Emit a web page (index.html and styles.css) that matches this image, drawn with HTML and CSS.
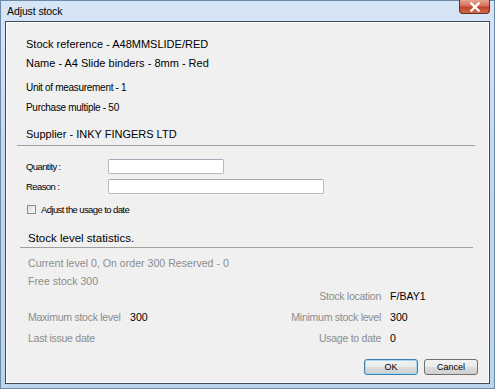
FILE: index.html
```html
<!DOCTYPE html>
<html lang="en">
<head>
    <meta charset="UTF-8">
    <title>Adjust stock</title>
    <link rel="stylesheet" href="styles.css">
</head>
<body>
    <div class="window">
        <div class="titlebar">
            <span class="title">Adjust stock</span>
            <div class="close">
                <svg width="14" height="10" viewBox="0 0 14 10">
                    <path d="M3.5 1.5 L10.5 8.5 M10.5 1.5 L3.5 8.5" stroke="#fff" stroke-width="2.4" stroke-linecap="square"/>
                </svg>
            </div>
        </div>

        <div class="client">
            <div class="info">
                <p class="big">Stock reference - A48MMSLIDE/RED</p>
                <p class="big">Name - A4 Slide binders - 8mm - Red</p>
                <p class="small first">Unit of measurement - 1</p>
                <p class="small">Purchase multiple - 50</p>
            </div>

            <div class="section-head supplier">Supplier - INKY FINGERS LTD</div>

            <div class="form">
                <div class="form-row">
                    <label for="qty">Quantity :</label>
                    <input id="qty" type="text" class="qty">
                </div>
                <div class="form-row">
                    <label for="reason">Reason :</label>
                    <input id="reason" type="text" class="reason">
                </div>
                <label class="check">
                    <span class="box"></span>
                    Adjust the usage to date
                </label>
            </div>

            <div class="section-head stats-head">Stock level statistics.</div>

            <div class="stats">
                <p>Current level 0, On order 300 Reserved - 0</p>
                <p>Free stock 300</p>
                <div class="stat-grid">
                    <span></span><span></span>
                    <span class="key right">Stock location</span><span class="val">F/BAY1</span>

                    <span class="key">Maximum stock level</span><span class="val">300</span>
                    <span class="key right">Minimum stock level</span><span class="val">300</span>

                    <span class="key">Last issue date</span><span class="val"></span>
                    <span class="key right">Usage to date</span><span class="val">0</span>
                </div>
            </div>

            <div class="buttons">
                <button class="btn default">OK</button>
                <button class="btn">Cancel</button>
            </div>
        </div>
    </div>
</body>
</html>
```

FILE: styles.css
```css
* {
    margin: 0;
    padding: 0;
    box-sizing: border-box;
}

body {
    font-family: "Liberation Sans", Arial, sans-serif;
    background: #c4d8ee;
    width: 495px;
    height: 389px;
    overflow: hidden;
}

.window {
    width: 495px;
    height: 389px;
    background: linear-gradient(180deg, #d7e6f6 0%, #c3d8ef 40%, #bcd3ec 100%);
    border: 1px solid #6f8aa8;
    display: flex;
    flex-direction: column;
}

.titlebar {
    height: 20px;
    display: flex;
    align-items: flex-start;
    justify-content: space-between;
    padding-left: 6px;
}

.title {
    font-family: "Liberation Sans", Arial, sans-serif;
    font-size: 10.5px;
    letter-spacing: -0.1px;
    line-height: 20px;
    color: #000;
}

.close {
    width: 31px;
    height: 14px;
    margin-right: 4px;
    margin-top: -1px;
    border: 1px solid #6c2a22;
    border-top: none;
    border-radius: 0 0 4px 4px;
    background: linear-gradient(180deg, #e8a493 0%, #d6705c 45%, #c0432b 55%, #d16a4a 100%);
    display: flex;
    align-items: center;
    justify-content: center;
}

.client {
    flex: 1;
    margin: 0 4px 4px 4px;
    background: #f0f0f0;
    border: 1px solid #3e4a58;
    box-shadow: inset 0 0 0 1px #ffffff;
    padding: 13px 16px 0 20px;
    position: relative;
}

.info p {
    font-size: 11px;
    color: #000;
}

.info .big {
    height: 19px;
    line-height: 19px;
}

.info .small {
    font-size: 10px;
    letter-spacing: -0.3px;
    height: 20px;
    line-height: 20px;
}

.info .first {
    margin-top: 5px;
}

.section-head {
    font-size: 11px;
    color: #000;
    border-bottom: 1px solid #a0a0a0;
}

.supplier {
    margin-top: 9px;
    padding: 0 0 4px 9px;
    margin-left: -9px;
    margin-right: -2px;
    line-height: 14px;
}

.form {
    padding-top: 10px;
}

.form-row {
    display: flex;
    align-items: center;
    height: 20px;
    font-size: 9.5px;
    letter-spacing: -0.6px;
}

.form-row label {
    width: 82px;
}

.form-row input {
    height: 15px;
    border: 1px solid #b5bcc7;
    border-top-color: #a3abb6;
    background: #fff;
    border-radius: 2px;
}

.qty {
    width: 116px;
}

.reason {
    width: 216px;
}

.check {
    display: flex;
    align-items: center;
    gap: 5px;
    margin-top: 8px;
    margin-left: 1px;
    height: 11px;
    font-size: 9.5px;
    letter-spacing: -0.6px;
}

.box {
    width: 9px;
    height: 9px;
    border: 1px solid #8f8f8f;
    background: linear-gradient(135deg, #dcdcdc, #fafafa);
}

.stats-head {
    margin-top: 16px;
    margin-left: -6px;
    margin-right: 0;
    padding: 0 0 2px 8px;
    font-size: 11.5px;
    line-height: 14px;
}

.stats {
    padding-left: 2px;
    font-size: 10.6px;
    color: #8d8d8d;
}

.stats p {
    height: 18px;
    line-height: 18px;
}

.stats p:first-child {
    margin-top: 6px;
}

.stat-grid {
    display: grid;
    grid-template-columns: 102px 121px 139px 1fr;
    grid-auto-rows: 21px;
    align-items: center;
    margin-top: -5px;
    white-space: nowrap;
}

.stat-grid .key {
    letter-spacing: -0.3px;
}

.stat-grid .right {
    text-align: right;
    padding-right: 9px;
}

.stat-grid .val {
    color: #000;
}

.buttons {
    position: absolute;
    right: 11px;
    bottom: 8px;
    display: flex;
    gap: 6px;
}

.btn {
    width: 54px;
    height: 16px;
    font-family: "Liberation Sans", Arial, sans-serif;
    font-size: 9px;
    color: #000;
    border: 1px solid #707070;
    border-radius: 3px;
    background: linear-gradient(180deg, #f2f2f2 0%, #ebebeb 50%, #dddddd 51%, #cfcfcf 100%);
}

.btn.default {
    border-color: #3c7fb1;
    box-shadow: inset 0 0 0 1px #a6d5f2;
}
```
